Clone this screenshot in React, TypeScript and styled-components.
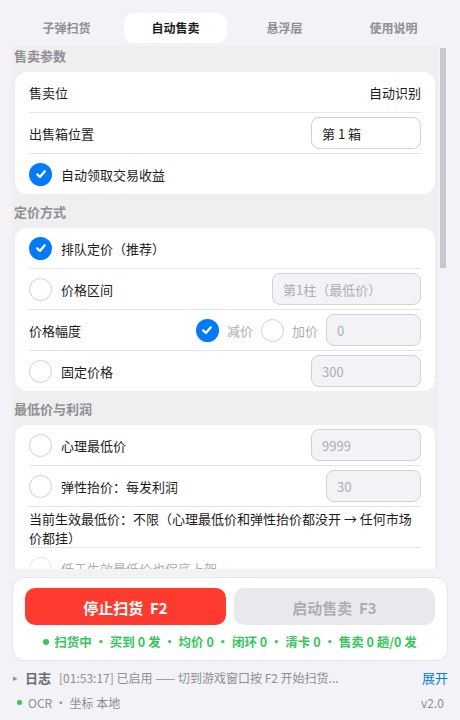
import React from 'react';
import styled, { createGlobalStyle } from 'styled-components';

const GlobalStyle = createGlobalStyle`
  html, body {
    margin: 0;
    padding: 0;
    background: #f2f2f7;
  }
  body {
    font-family: "Noto Sans CJK SC", "Noto Sans", sans-serif;
    color: #1c1c1e;
  }
  * { box-sizing: border-box; }
`;

const Page = styled.div`
  height: 720px;
  display: flex;
  flex-direction: column;
  padding: 10px 12px 0;
  overflow: hidden;
`;

const TabBar = styled.nav`
  display: grid;
  grid-template-columns: repeat(4, 1fr);
  padding: 3px 0;
  flex-shrink: 0;
`;

const Tab = styled.button<{ $active?: boolean }>`
  height: 30px;
  margin: 0 3px;
  padding: 0;
  border: none;
  border-radius: 9px;
  background: ${p => (p.$active ? '#fff' : 'transparent')};
  color: ${p => (p.$active ? '#1c1c1e' : '#8e8e93')};
  font: 700 12px/30px "Noto Sans CJK SC", sans-serif;
`;

const ScrollArea = styled.div`
  height: 523px;
  flex-shrink: 0;
  display: flex;
`;

const ScrollContent = styled.div`
  flex: 1;
  overflow: hidden;
  background: #efeff0;
  padding: 0 3px 12px;
`;

const Track = styled.div`
  width: 10px;
  flex-shrink: 0;
  padding: 2px;
  background: #f2f2f7;
`;

const Thumb = styled.div`
  background: #c7c7cc;
`;

const SectionTitle = styled.h3`
  margin: 0 -1px;
  padding: 9px 0 7px;
  font-size: 13px;
  line-height: 18px;
  font-weight: 700;
  color: #8e8e93;

  &:first-child {
    padding-top: 1px;
  }
`;

const Card = styled.div`
  background: #fff;
  border-radius: 12px;
  padding: 0 14px;
`;

const Row = styled.div`
  min-height: 40px;
  display: flex;
  align-items: center;
  gap: 8px;
  font-size: 13px;
  line-height: 19px;

  & + & {
    min-height: 41px;
    border-top: 1px solid #e5e5ea;
  }
`;

const Label = styled.span<{ $dim?: boolean }>`
  flex: 1;
  display: flex;
  align-items: center;
  gap: 9px;
  color: ${p => (p.$dim ? '#aeaeb2' : '#1c1c1e')};
`;

const Note = styled.p`
  margin: 0;
  padding: 2px 8px 0 0;
  font-size: 13px;
  line-height: 19px;
`;

const Value = styled.span`
  color: #1c1c1e;
`;

const Option = styled.span`
  display: flex;
  align-items: center;
  gap: 8px;
  color: #aeaeb2;
`;

const Field = styled.input<{ $w: number; $off?: boolean }>`
  width: ${p => p.$w}px;
  height: 32px;
  flex-shrink: 0;
  border: 1px solid #d1d1d6;
  border-radius: 8px;
  padding: 0 10px;
  outline: none;
  font: 400 13px "Noto Sans CJK SC", sans-serif;
  background: ${p => (p.$off ? '#f2f2f7' : '#fff')};
  color: ${p => (p.$off ? '#aeaeb2' : '#1c1c1e')};
`;

const Circle = styled.span<{ $on?: boolean; $dim?: boolean }>`
  width: 23px;
  height: 23px;
  flex-shrink: 0;
  border-radius: 50%;
  display: inline-flex;
  align-items: center;
  justify-content: center;
  background: ${p => (p.$on ? '#007aff' : '#fff')};
  border: ${p => (p.$on ? 'none' : `1.5px solid ${p.$dim ? '#e5e5ea' : '#d1d1d6'}`)};
`;

const Panel = styled.div`
  margin-top: 8px;
  height: 84px;
  flex-shrink: 0;
  background: #fff;
  border: 1px solid #e5e5ea;
  border-radius: 12px;
  padding: 10px 12px 0;
`;

const Buttons = styled.div`
  display: grid;
  grid-template-columns: 1fr 1fr;
  gap: 8px;
`;

const ActionButton = styled.button<{ $tone: 'stop' | 'idle' }>`
  height: 37px;
  border: none;
  border-radius: 10px;
  font: 700 15px/37px "Noto Sans CJK SC", sans-serif;
  white-space: pre;
  background: ${p => (p.$tone === 'stop' ? '#ff3b30' : '#e9e9ed')};
  color: ${p => (p.$tone === 'stop' ? '#fff' : '#aeaeb2')};
`;

const Status = styled.div`
  margin-top: 8px;
  display: flex;
  align-items: center;
  justify-content: center;
  gap: 5px;
  font-size: 12.5px;
  line-height: 18px;
  font-weight: 700;
  color: #34c759;
  white-space: nowrap;
`;

const StatusDot = styled.span`
  width: 6px;
  height: 6px;
  border-radius: 50%;
  background: #34c759;
`;

const LogRow = styled.div`
  height: 32px;
  display: flex;
  align-items: center;
  padding-left: 1px;
  font-size: 12px;
  color: #8e8e93;
  white-space: nowrap;
`;

const Caret = styled.span`
  font-size: 9px;
  color: #8e8e93;
  width: 12px;
`;

const LogTitle = styled.span`
  font-size: 13px;
  font-weight: 700;
  color: #6c6c70;
  margin-right: 8px;
`;

const LogText = styled.span`
  flex: 1;
  overflow: hidden;
`;

const Expand = styled.span`
  color: #007aff;
  font-size: 13px;
`;

const Footer = styled.div`
  height: 18px;
  display: flex;
  align-items: center;
  padding: 0 4px 0 5px;
  font-size: 12px;
  color: #8e8e93;
`;

const Dot = styled.span`
  width: 5px;
  height: 5px;
  border-radius: 50%;
  background: #34c759;
  margin-right: 6px;
`;

const Grow = styled.span`
  flex: 1;
`;

function Check({ on, dim }: { on?: boolean; dim?: boolean }) {
  return (
    <Circle $on={on} $dim={dim}>
      {on && (
        <svg width="14" height="14" viewBox="0 0 14 14">
          <path d="M3.2 7.4 L5.9 10 L10.8 4.3" fill="none" stroke="#fff" strokeWidth="2.4" strokeLinecap="round" strokeLinejoin="round" />
        </svg>
      )}
    </Circle>
  );
}

const tabs = ['子弹扫货', '自动售卖', '悬浮层', '使用说明'];

// visible part of the list vs. the whole list, for the scroll thumb
const thumbRatio = 0.42;

export default function App() {
  return (
    <>
      <GlobalStyle />
      <Page>
        <TabBar>
          {tabs.map(t => (
            <Tab key={t} $active={t === '自动售卖'}>{t}</Tab>
          ))}
        </TabBar>

        <ScrollArea>
          <ScrollContent>
            <SectionTitle>售卖参数</SectionTitle>
            <Card>
              <Row>
                <Label>售卖位</Label>
                <Value>自动识别</Value>
              </Row>
              <Row>
                <Label>出售箱位置</Label>
                <Field $w={110} defaultValue="第 1 箱" readOnly />
              </Row>
              <Row>
                <Label><Check on />自动领取交易收益</Label>
              </Row>
            </Card>

            <SectionTitle>定价方式</SectionTitle>
            <Card>
              <Row>
                <Label><Check on />排队定价（推荐）</Label>
              </Row>
              <Row>
                <Label><Check />价格区间</Label>
                <Field $w={149} $off defaultValue="第1柱（最低价）" readOnly />
              </Row>
              <Row>
                <Label>价格幅度</Label>
                <Option><Check on />减价</Option>
                <Option><Check />加价</Option>
                <Field $w={95} $off defaultValue="0" readOnly />
              </Row>
              <Row>
                <Label><Check />固定价格</Label>
                <Field $w={110} $off defaultValue="300" readOnly />
              </Row>
            </Card>

            <SectionTitle>最低价与利润</SectionTitle>
            <Card>
              <Row>
                <Label><Check />心理最低价</Label>
                <Field $w={110} $off defaultValue="9999" readOnly />
              </Row>
              <Row>
                <Label><Check />弹性抬价：每发利润</Label>
                <Field $w={95} $off defaultValue="30" readOnly />
              </Row>
              <Row>
                <Note>当前生效最低价：不限（心理最低价和弹性抬价都没开 → 任何市场价都挂）</Note>
              </Row>
              <Row>
                <Label $dim><Check dim />低于生效最低价也保底上架</Label>
              </Row>
            </Card>
          </ScrollContent>
          <Track>
            <Thumb style={{ height: `${Math.round(523 * thumbRatio)}px` }} />
          </Track>
        </ScrollArea>

        <Panel>
          <Buttons>
            <ActionButton $tone="stop">{'停止扫货  F2'}</ActionButton>
            <ActionButton $tone="idle">{'启动售卖  F3'}</ActionButton>
          </Buttons>
          <Status>
            <StatusDot />
            扫货中 • 买到 0 发 • 均价 0 • 闭环 0 • 清卡 0 • 售卖 0 趟/0 发
          </Status>
        </Panel>

        <LogRow>
          <Caret>▸</Caret>
          <LogTitle>日志</LogTitle>
          <LogText>[01:53:17] 已启用 —— 切到游戏窗口按 F2 开始扫货...</LogText>
          <Expand>展开</Expand>
        </LogRow>

        <Footer>
          <Dot />
          <Grow>OCR · 坐标 本地</Grow>
          <span>v2.0</span>
        </Footer>
      </Page>
    </>
  );
}
